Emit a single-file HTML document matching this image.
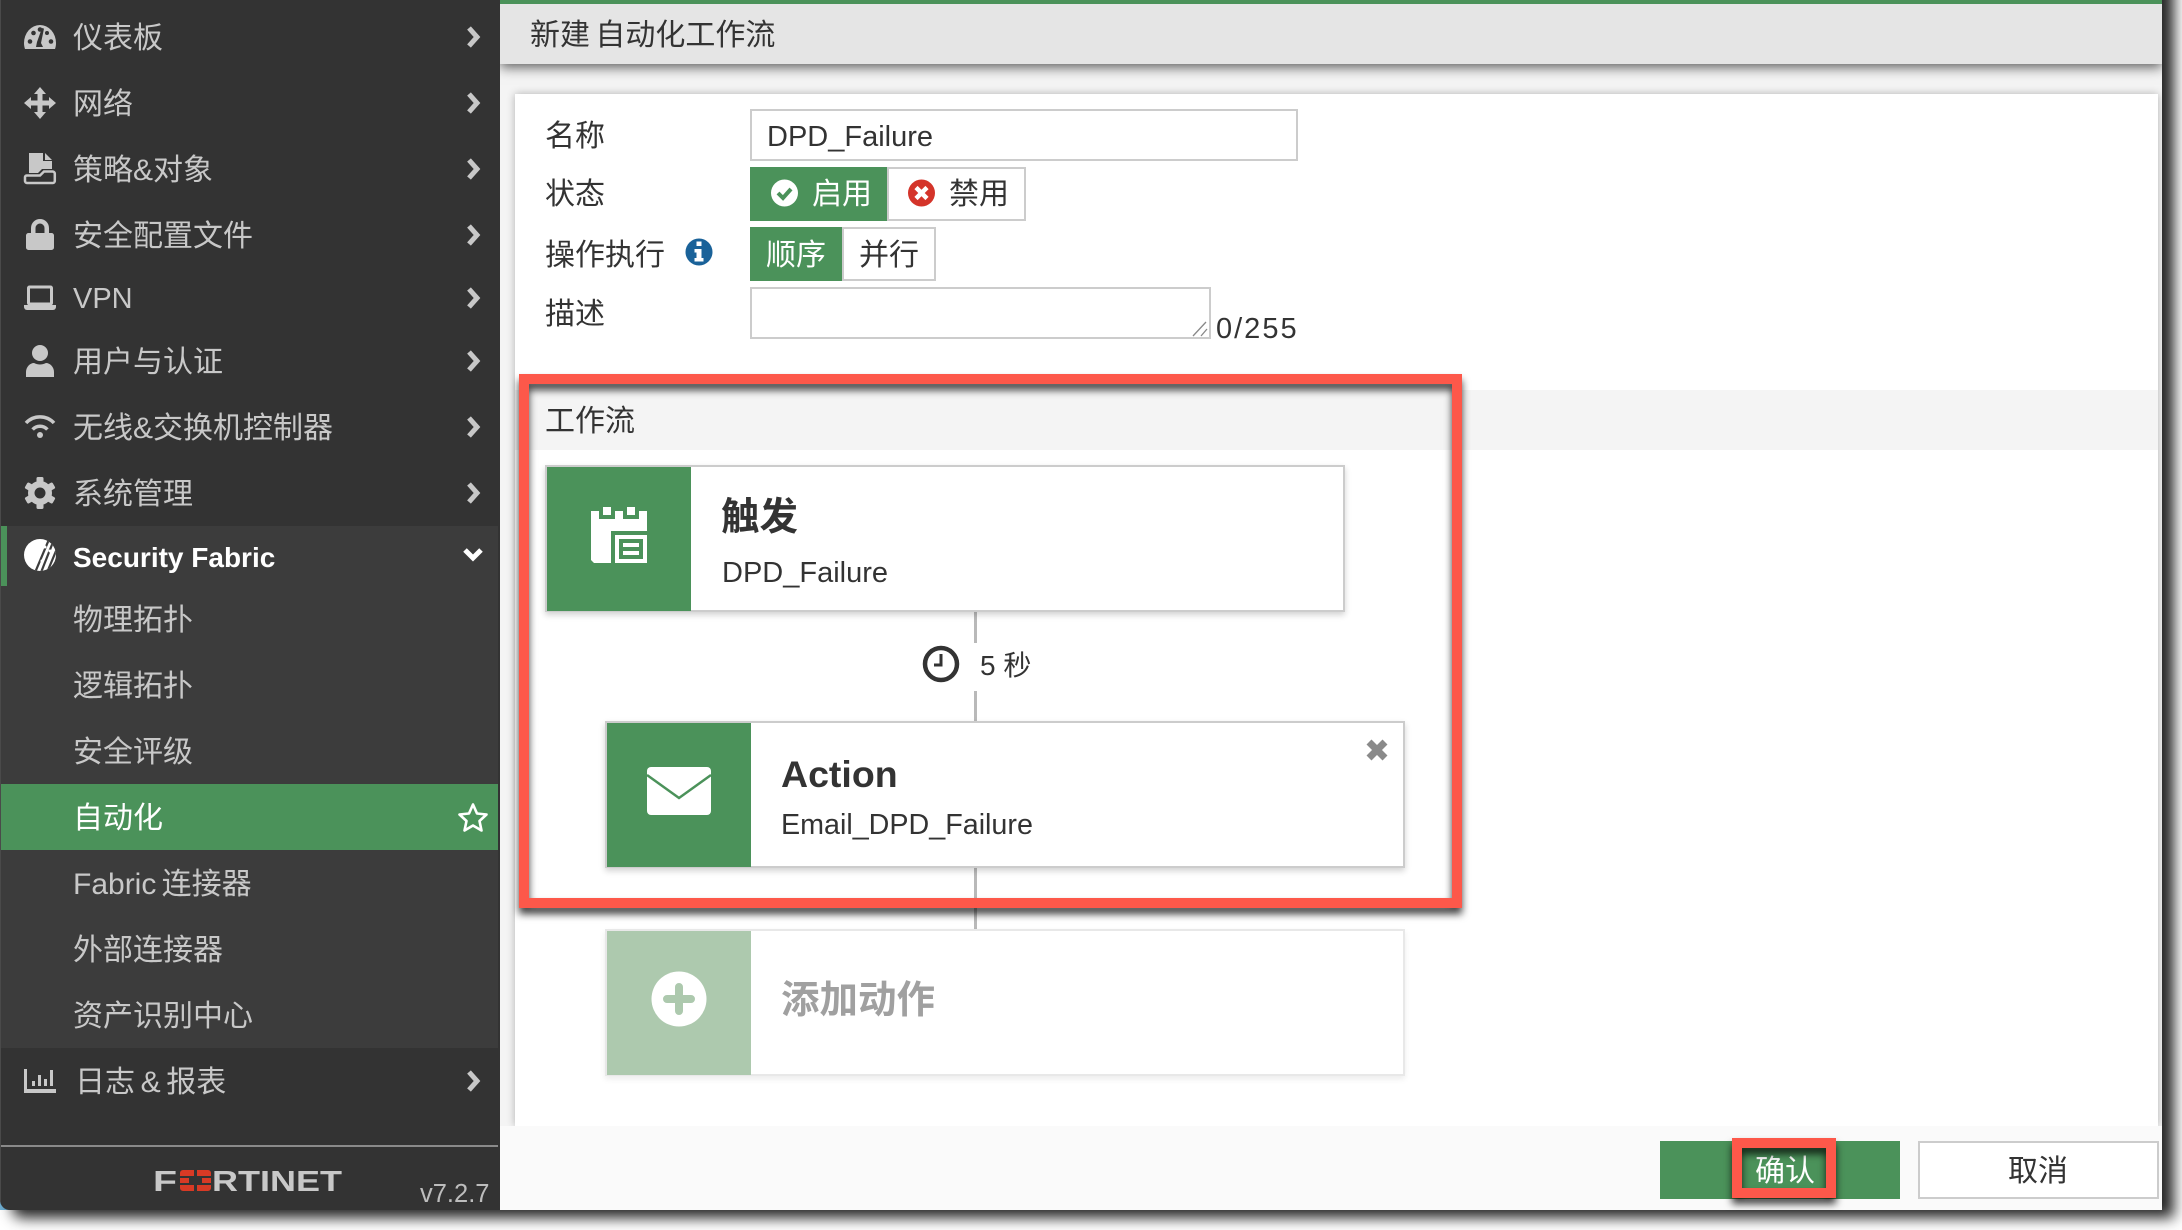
<!DOCTYPE html>
<html lang="zh">
<head>
<meta charset="utf-8">
<title>新建 自动化工作流</title>
<style>
html,body{margin:0;padding:0;width:2182px;height:1230px;overflow:hidden;background:#fff}
body{position:relative;font-family:"Liberation Sans","Noto Sans CJK SC",sans-serif;font-size:30px;color:#333}
div,svg,span{box-sizing:border-box}
.a{position:absolute}
.t{position:absolute;line-height:40px;white-space:nowrap;margin-top:2px}
.l{margin-top:1px}
.m{color:#c8c8c8}
.win{position:absolute;left:0;top:-30px;width:2162px;height:1240px;border-radius:0 0 0 10px;box-shadow:12px 8px 14px rgba(0,0,0,.85)}
.main{position:absolute;left:500px;top:0;width:1662px;height:1210px;background:#f4f4f4;overflow:hidden}
.side{position:absolute;left:0;top:0;width:500px;height:1210px;background:#333;border-radius:0 0 0 10px;overflow:hidden}
.bd{border:2px solid #ccc;background:#fff}
.g{background:#4b925a}
.card{position:absolute;background:#fff;border:2px solid #ccc;box-shadow:0 3px 6px rgba(0,0,0,.18)}
.red{position:absolute;border:10px solid #fd584a;filter:drop-shadow(0 6px 4px rgba(0,0,0,.75))}
svg.o{position:absolute;left:0;top:0;overflow:visible}
</style>
</head>
<body>
<div class="a" style="left:0;top:1198px;width:14px;height:12px;background:#6fb0d4"></div>
<div class="win"></div>

<div class="main">
  <div class="a" style="left:0;top:4px;width:1662px;height:60px;background:#e5e5e5;box-shadow:0 3px 12px rgba(0,0,0,.65)"></div>
  <div class="a" style="left:0;top:0;width:1662px;height:4px;background:#4b925a"></div>
  <div class="a" style="left:15px;top:94px;width:1643px;height:1032px;background:#fff;box-shadow:0 0 8px rgba(0,0,0,.28)"></div>
  <div class="a" style="left:15px;top:390px;width:1643px;height:60px;background:#f4f4f4"></div>
  <div class="a" style="left:0;top:1126px;width:1662px;height:84px;background:#fafafa"></div>
</div>

<div class="side">
  <div class="a" style="left:0;top:526px;width:498px;height:522px;background:#3c3c3c"></div>
  <div class="a" style="left:0;top:526px;width:7px;height:60px;background:#4b925a"></div>
  <div class="a" style="left:0;top:784px;width:498px;height:66px;background:#4b925a"></div>
  <div class="a" style="left:0;top:1145px;width:498px;height:2px;background:#8a8a8a"></div>
  <div class="a" style="left:0;top:0;width:1px;height:1210px;background:#4a4a4a"></div>
</div>

<span class="t m" style="left:73px;top:17px">仪表板</span>
<span class="t m" style="left:73px;top:83px">网络</span>
<span class="t m" style="left:73px;top:149px">策略&amp;对象</span>
<span class="t m" style="left:73px;top:215px">安全配置文件</span>
<span class="t l m" style="left:73px;top:278px;font-size:29px">VPN</span>
<span class="t m" style="left:73px;top:341px">用户与认证</span>
<span class="t m" style="left:73px;top:407px">无线&amp;交换机控制器</span>
<span class="t m" style="left:73px;top:473px">系统管理</span>
<span class="t l" style="left:73px;top:537px;font-size:28px;font-weight:bold;color:#fff">Security Fabric</span>
<span class="t m" style="left:73px;top:599px">物理拓扑</span>
<span class="t m" style="left:73px;top:665px">逻辑拓扑</span>
<span class="t m" style="left:73px;top:731px">安全评级</span>
<span class="t" style="left:73px;top:797px;color:#fff">自动化</span>
<span class="t m" style="left:73px;top:863px;word-spacing:-3px">Fabric 连接器</span>
<span class="t m" style="left:73px;top:929px">外部连接器</span>
<span class="t m" style="left:73px;top:995px">资产识别中心</span>
<span class="t m" style="left:75px;top:1061px;word-spacing:-2.700px">日志 &amp; 报表</span>
<span class="t" style="left:420px;top:1172px;font-size:25.5px;color:#bdbdbd">v7.2.7</span>

<span class="t" style="left:530px;top:14px;word-spacing:-3px">新建 自动化工作流</span>

<span class="t" style="left:545px;top:115px">名称</span>
<span class="t" style="left:545px;top:173px">状态</span>
<span class="t" style="left:545px;top:234px">操作执行</span>
<span class="t" style="left:545px;top:293px">描述</span>

<div class="a bd" style="left:750px;top:109px;width:548px;height:52px"></div>
<span class="t l" style="left:767px;top:116px;font-size:29px">DPD_Failure</span>

<div class="a g" style="left:750px;top:167px;width:137px;height:54px"></div>
<div class="a bd" style="left:887px;top:167px;width:139px;height:54px"></div>
<span class="t" style="left:812px;top:173px;color:#fff">启用</span>
<span class="t" style="left:949px;top:173px">禁用</span>

<div class="a g" style="left:750px;top:227px;width:92px;height:54px"></div>
<div class="a bd" style="left:842px;top:227px;width:94px;height:54px"></div>
<span class="t" style="left:766px;top:234px;color:#fff">顺序</span>
<span class="t" style="left:859px;top:234px">并行</span>

<div class="a bd" style="left:750px;top:287px;width:461px;height:52px"></div>
<span class="t l" style="left:1216px;top:308px;font-size:29px;letter-spacing:2px">0/255</span>

<span class="t" style="left:545px;top:400px">工作流</span>

<div class="a" style="left:974px;top:612px;width:3px;height:31px;background:#b9b9b9"></div>
<div class="a" style="left:974px;top:691px;width:3px;height:32px;background:#b9b9b9"></div>
<div class="a" style="left:974px;top:866px;width:3px;height:65px;background:#b9b9b9"></div>

<div class="card" style="left:545px;top:465px;width:800px;height:147px"></div>
<div class="a g" style="left:547px;top:467px;width:144px;height:144px"></div>
<span class="t l" style="left:721px;top:497px;font-size:38.500px;font-weight:bold">触发</span>
<span class="t l" style="left:722px;top:552px;font-size:29px">DPD_Failure</span>

<span class="t l" style="left:980px;top:645px;font-size:28px">5 秒</span>

<div class="card" style="left:605px;top:721px;width:800px;height:147px"></div>
<div class="a g" style="left:607px;top:723px;width:144px;height:144px"></div>
<span class="t l" style="left:781px;top:753px;font-size:37.500px;font-weight:bold">Action</span>
<span class="t" style="left:781px;top:803px;font-size:28.700px">Email_DPD_Failure</span>

<div class="card" style="left:605px;top:929px;width:800px;height:147px;border-color:#e8e8e8;box-shadow:0 3px 6px rgba(0,0,0,.08)"></div>
<div class="a" style="left:607px;top:931px;width:144px;height:144px;background:#adc9ae"></div>
<span class="t" style="left:781px;top:979px;font-size:38.500px;font-weight:bold;color:#a0a0a0">添加动作</span>

<div class="a g" style="left:1660px;top:1141px;width:240px;height:58px"></div>
<div class="a bd" style="left:1918px;top:1141px;width:241px;height:58px"></div>
<span class="t" style="left:1755px;top:1150px;color:#fff">确认</span>
<span class="t" style="left:2008px;top:1150px">取消</span>

<div class="red" style="left:519px;top:374px;width:943px;height:534px"></div>
<div class="red" style="left:1732px;top:1138px;width:104px;height:60px"></div>

<svg class="o" width="2182" height="1230" viewBox="0 0 2182 1230">
  <!-- dashboard -->
  <path fill="#c8c8c8" d="M24 43a16 18 0 0 1 32 0c0 2-.3 4-1 6H25c-.7-2-1-4-1-6z"/>
  <g fill="#333"><circle cx="30" cy="41.500" r="2.300"/><circle cx="33.500" cy="33" r="2.300"/><circle cx="40" cy="29.500" r="2.300"/><circle cx="47" cy="33" r="2"/><circle cx="51" cy="41.500" r="2.300"/><path d="M36 47l1-5 5-14 2 .6-3 14.400 2 4z"/></g>
  <!-- move -->
  <path fill="#c8c8c8" d="M40 87l6 7h-3.500v6.500H49V97l7 6-7 6v-3.500h-6.500V112H46l-6 7-6-7h3.500v-6.500H31v3.500l-7-6 7-6v3.500h6.500V94H34z"/>
  <!-- policy -->
  <path fill="#c8c8c8" d="M29 153h14v8h9v8H42l-4 4H29z"/><path fill="#c8c8c8" d="M45 153l7 7h-7z"/>
  <path fill="none" stroke="#c8c8c8" stroke-width="2.500" d="M40 175.500l4-4h8.500a2.300 2.300 0 0 1 2.300 2.300V181a2 2 0 0 1-2 2H27a2 2 0 0 1-2-2v-4a2 2 0 0 1 2-1.500z"/>
  <!-- lock -->
  <path fill="#c8c8c8" d="M31 233v-5a9 9 0 0 1 18 0v5h2.500a2.500 2.500 0 0 1 2.500 2.500v12a2.500 2.500 0 0 1-2.500 2.500h-23a2.500 2.500 0 0 1-2.500-2.500v-12a2.500 2.500 0 0 1 2.500-2.500zm4.500 0h9v-5a4.500 4.500 0 0 0-9 0z"/>
  <!-- laptop -->
  <rect x="28.500" y="287" width="23" height="17" fill="none" stroke="#c8c8c8" stroke-width="3" rx="1"/>
  <path fill="#c8c8c8" d="M24 305h32v2a3 3 0 0 1-3 3H27a3 3 0 0 1-3-3z"/>
  <!-- user -->
  <circle cx="40" cy="353" r="8" fill="#c8c8c8"/><path fill="#c8c8c8" d="M26 377v-5c0-5 4-9 8-9 2 1 4 1.500 6 1.500s4-.5 6-1.500c4 0 8 4 8 9v5z"/>
  <!-- wifi -->
  <g fill="none" stroke="#c8c8c8" stroke-width="3.500"><path d="M32.600 429.500a10 10 0 0 1 14.800 0"/><path d="M26 423a19 19 0 0 1 28 0"/></g><circle cx="40" cy="435" r="3" fill="#c8c8c8"/>
  <!-- gear -->
  <g fill="#c8c8c8" transform="translate(40 493)"><circle r="12"/><g><rect x="-3.500" y="-16" width="7" height="32" rx="1.500"/><rect x="-3.500" y="-16" width="7" height="32" rx="1.500" transform="rotate(60)"/><rect x="-3.500" y="-16" width="7" height="32" rx="1.500" transform="rotate(120)"/></g><circle r="5.500" fill="#333"/></g>
  <!-- fabric -->
  <defs><clipPath id="fc"><circle cx="40" cy="555" r="16"/></clipPath></defs>
  <circle cx="40" cy="555" r="16" fill="#fff"/>
  <g clip-path="url(#fc)" stroke="#3c3c3c" stroke-width="2.200"><path d="M50 537L34 575"/><path d="M55 537L40 575"/><path d="M61 539L46 575"/></g>
  <g fill="#fff"><circle cx="45" cy="547" r="1.500"/><circle cx="50" cy="551" r="1.500"/><circle cx="42" cy="561" r="1.500"/></g>
  <!-- bars -->
  <path fill="#c8c8c8" d="M24 1069h3v20h29v4H24z"/><path fill="#c8c8c8" d="M32 1081h3v5h-3zM38 1075h3v11h-3zM44 1079h3v7h-3zM50 1070h3v16h-3z"/>
  <!-- chevrons -->
  <g fill="none" stroke="#c8c8c8" stroke-width="5"><path d="M469 28l8 9-8 9"/><path d="M469 94l8 9-8 9"/><path d="M469 160l8 9-8 9"/><path d="M469 226l8 9-8 9"/><path d="M469 289l8 9-8 9"/><path d="M469 352l8 9-8 9"/><path d="M469 418l8 9-8 9"/><path d="M469 484l8 9-8 9"/><path d="M469 1072l8 9-8 9"/></g>
  <path fill="none" stroke="#fff" stroke-width="5" d="M465 550l8 8 8-8"/>
  <path fill="none" stroke="#fff" stroke-width="2.600" stroke-linejoin="round" d="M473 804.500l4 9 9.500 1-7 6.500 2 9.500-8.500-5-8.500 5 2-9.500-7-6.500 9.500-1z"/>
  <!-- logo -->
  <text x="153" y="1191" font-family="Liberation Sans" font-weight="bold" font-size="29" fill="#c8c8c8" textLength="24" lengthAdjust="spacingAndGlyphs">F</text>
  <text x="212" y="1191" font-family="Liberation Sans" font-weight="bold" font-size="29" fill="#c8c8c8" textLength="130" lengthAdjust="spacingAndGlyphs">RTINET</text>
  <g fill="#d83a25"><path d="M180 1176v-3a3 3 0 0 1 3-3h11v6zM197 1170h11a3 3 0 0 1 3 3v3h-14zM180 1178h9v5h-9zM202 1178h9v5h-9zM180 1185h14v6h-11a3 3 0 0 1-3-3zM197 1185h14v3a3 3 0 0 1-3 3h-11z"/></g>
  <!-- status icons -->
  <circle cx="784.500" cy="193" r="13.500" fill="#fff"/><path fill="none" stroke="#4b925a" stroke-width="4" d="M778 193l5 5 8-9"/>
  <circle cx="921.500" cy="193" r="13.500" fill="#d4342a"/><path fill="none" stroke="#fff" stroke-width="4.500" d="M916 187.500l11 11M927 187.500l-11 11"/>
  <circle cx="699" cy="252" r="13.500" fill="#1a6299"/><path fill="#fff" d="M696.500 241.500h5v4.500h-5zM694.500 249h7v9h2v3.500h-9V258h2v-5.500h-2z"/>
  <!-- resize -->
  <path stroke="#888" stroke-width="1.300" fill="none" d="M1193 336l13-14M1201 336l6-7"/>
  <!-- calendar -->
  <path fill="#fff" d="M591 511h8v8h16v-8h8v8h16v-8h8v20h-36v32h-17l-3-3zM603 507h8v8h-8zM627 507h8v8h-8z"/>
  <path fill="#fff" fill-rule="evenodd" d="M615 535h32v28h-32zM619 539v20h24v-20z"/><path fill="#fff" d="M623 543h16v4h-16zM623 551h16v4h-16z"/>
  <!-- clock -->
  <circle cx="941" cy="664" r="16" fill="none" stroke="#333" stroke-width="4.500"/><path fill="none" stroke="#333" stroke-width="3" d="M941 654v11h-7"/>
  <!-- mail -->
  <rect x="647" y="767" width="64" height="48" rx="4" fill="#fff"/><path fill="none" stroke="#4b925a" stroke-width="2.500" d="M647 775l32 23 32-23"/>
  <!-- close -->
  <path fill="none" stroke="#8a8a8a" stroke-width="7" d="M1369 742l16 16M1385 742l-16 16"/>
  <!-- plus -->
  <circle cx="679" cy="999" r="27.500" fill="#fff"/><path fill="none" stroke="#adc9ae" stroke-width="8" stroke-linecap="round" d="M679 987v24M667 999h24"/>
</svg>
</body>
</html>
